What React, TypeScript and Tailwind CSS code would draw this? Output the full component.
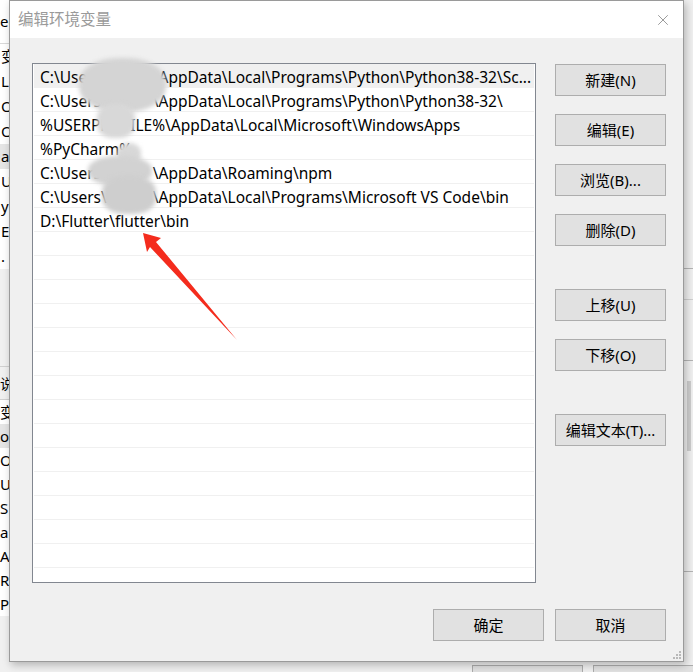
import { X } from "lucide-react";

const ui = "font-['Noto_Sans','Noto_Sans_CJK_SC',sans-serif]";

type Row = { text: React.ReactNode; selected?: boolean };

const Gap = ({ w }: { w: string }) => <span className={`inline-block ${w}`} />;

const rows: Row[] = [
  {
    text: (
      <>
        C:\Users\<Gap w="w-[46px]" />\AppData\Local\Programs\Python\Python38-32\Sc...
      </>
    ),
    selected: true,
  },
  {
    text: (
      <>
        C:\Users\<Gap w="w-[46px]" />\AppData\Local\Programs\Python\Python38-32\
      </>
    ),
  },
  { text: "%USERPROFILE%\\AppData\\Local\\Microsoft\\WindowsApps" },
  { text: "%PyCharm%" },
  {
    text: (
      <>
        C:\Users\<Gap w="w-[46px]" />\AppData\Roaming\npm
      </>
    ),
  },
  {
    text: (
      <>
        C:\Users\<Gap w="w-[46px]" />\AppData\Local\Programs\Microsoft VS Code\bin
      </>
    ),
  },
  { text: "D:\\Flutter\\flutter\\bin" },
];

const sideTop = ["变", "L", "Or", "Or", "a", "U", "y", "E", "."];
const sideBottom = ["变", "o", "Or", "U", "S", "a", "A", "R", "P"];

function Btn({ label }: { label: string }) {
  return (
    <button className="flex h-[32px] w-[111px] items-center justify-center border border-[#adadad] bg-[#e1e1e1] text-[15px] text-black">
      {label}
    </button>
  );
}

export default function App() {
  const listRows = Array.from({ length: 22 }, (_, i) => rows[i]);

  return (
    <div className={`relative h-[672px] w-[693px] overflow-hidden bg-[#f0f0f0] ${ui}`}>
      {/* window behind the dialog */}
      <div className="absolute left-0 top-0 h-[672px] w-[693px]">
        <div className="flex h-[44px] w-[20px] items-center border-b border-[#d9d9d9] bg-white text-[15px] text-black">
          ee
        </div>
        <div className="flex w-[20px] flex-col bg-white text-[15px] text-black">
          {sideTop.map((s, i) => (
            <div key={i} className={`flex h-[25px] items-center pl-[1px] ${i === 4 ? "bg-[#e5e5e5]" : ""}`}>
              {s}
            </div>
          ))}
        </div>
        <div className="mt-[97px] flex h-[34px] w-[20px] items-center border-y border-[#d0d0d0] bg-[#f0f0f0] text-[14px]">
          说
        </div>
        <div className="flex w-[20px] flex-col bg-white text-[15px] text-black">
          {sideBottom.map((s, i) => (
            <div key={i} className={`flex h-[24px] items-center ${i === 1 ? "bg-[#e5e5e5]" : ""}`}>
              {s}
            </div>
          ))}
        </div>
        <div className="absolute right-0 top-[40px] h-[600px] w-[10px] bg-[#f0f0f0]">
          <div className="mt-[228px] border-t border-[#b5b5b5]" />
          <div className="mt-[30px] border-t border-[#d0d0d0]" />
          <div className="mt-[60px] border-t border-[#b5b5b5]" />
          <div className="ml-[4px] mt-[20px] h-[70px] w-[4px] bg-[#cdcdcd]" />
          <div className="mt-[120px] border-t border-[#b5b5b5]" />
        </div>
        <div className="absolute left-[472px] top-[665px] h-[20px] w-[111px] border border-[#adadad] bg-[#e1e1e1]" />
        <div className="absolute left-[593px] top-[665px] h-[20px] w-[111px] border border-[#adadad] bg-[#e1e1e1]" />
      </div>

      {/* dialog window */}
      <div className="absolute left-[9px] top-0 flex h-[662px] w-[675px] flex-col border border-[#9a9a9a] bg-[#f0f0f0] shadow-[2px_3px_8px_rgba(0,0,0,0.25)]">
        <div className="flex h-[37px] items-center justify-between bg-white pl-[8px] pr-[11px]">
          <span className="text-[15.5px] text-[#9a9a9a]">编辑环境变量</span>
          <X size={18} strokeWidth={1} className="text-[#7a7a7a]" />
        </div>

        <div className="flex flex-1 flex-col pl-[22px] pr-[17px] pt-[25px]">
          <div className="flex gap-[19px]">
            <div className="flex h-[520px] w-[504px] flex-col border border-[#828790] bg-white">
              {listRows.map((r, i) => (
                <div
                  key={i}
                  className={`mx-[1px] flex h-[24px] shrink-0 items-center border-b border-[#f0f0f0] pl-[6px] pt-[4px] text-[15.5px] leading-none text-black whitespace-nowrap ${
                    r?.selected ? "bg-[#f0f0f0]" : ""
                  }`}
                >
                  {r?.text}
                </div>
              ))}
            </div>

            <div className="flex flex-col pt-[1px]">
              <div className="flex flex-col gap-[18px]">
                <Btn label="新建(N)" />
                <Btn label="编辑(E)" />
                <Btn label="浏览(B)..." />
                <Btn label="删除(D)" />
              </div>
              <div className="mt-[43px] flex flex-col gap-[18px]">
                <Btn label="上移(U)" />
                <Btn label="下移(O)" />
              </div>
              <div className="mt-[43px]">
                <Btn label="编辑文本(T)..." />
              </div>
            </div>
          </div>

          <div className="mt-[26px] flex justify-end gap-[11px]">
            <Btn label="确定" />
            <Btn label="取消" />
          </div>
        </div>

        {/* size grip */}
        <div className="absolute bottom-[2px] right-[2px] grid grid-cols-3 gap-[1px]">
          {[0, 0, 1, 0, 1, 1, 1, 1, 1].map((v, i) => (
            <div key={i} className={`h-[2px] w-[2px] ${v ? "bg-[#b8b8b8]" : ""}`} />
          ))}
        </div>
      </div>

      {/* pixelated redaction blobs */}
      <div className="pointer-events-none absolute inset-0">
        <div className="absolute left-[79px] top-[58px] h-[54px] w-[87px] rounded-[45%] bg-[#d4d4d4] blur-[2px]" />
        <div className="absolute left-[97px] top-[104px] h-[34px] w-[38px] rounded-[40%] bg-[#d8d8d8] blur-[2px]" />
        <div className="absolute left-[117px] top-[143px] h-[22px] w-[24px] rounded-[45%] bg-[#d8d8d8] blur-[2px]" />
        <div className="absolute left-[88px] top-[156px] h-[30px] w-[64px] rounded-[45%] bg-[#d2d2d2] blur-[2px]" />
        <div className="absolute left-[102px] top-[176px] h-[38px] w-[54px] rounded-[40%] bg-[#cecece] blur-[2px]" />
      </div>

      {/* red arrow */}
      <svg className="pointer-events-none absolute inset-0" width="693" height="672" viewBox="0 0 693 672">
        <polygon points="143,233 161,238 156,242 237,340 150,247 147,252" fill="#f42c1d" />
      </svg>
    </div>
  );
}
